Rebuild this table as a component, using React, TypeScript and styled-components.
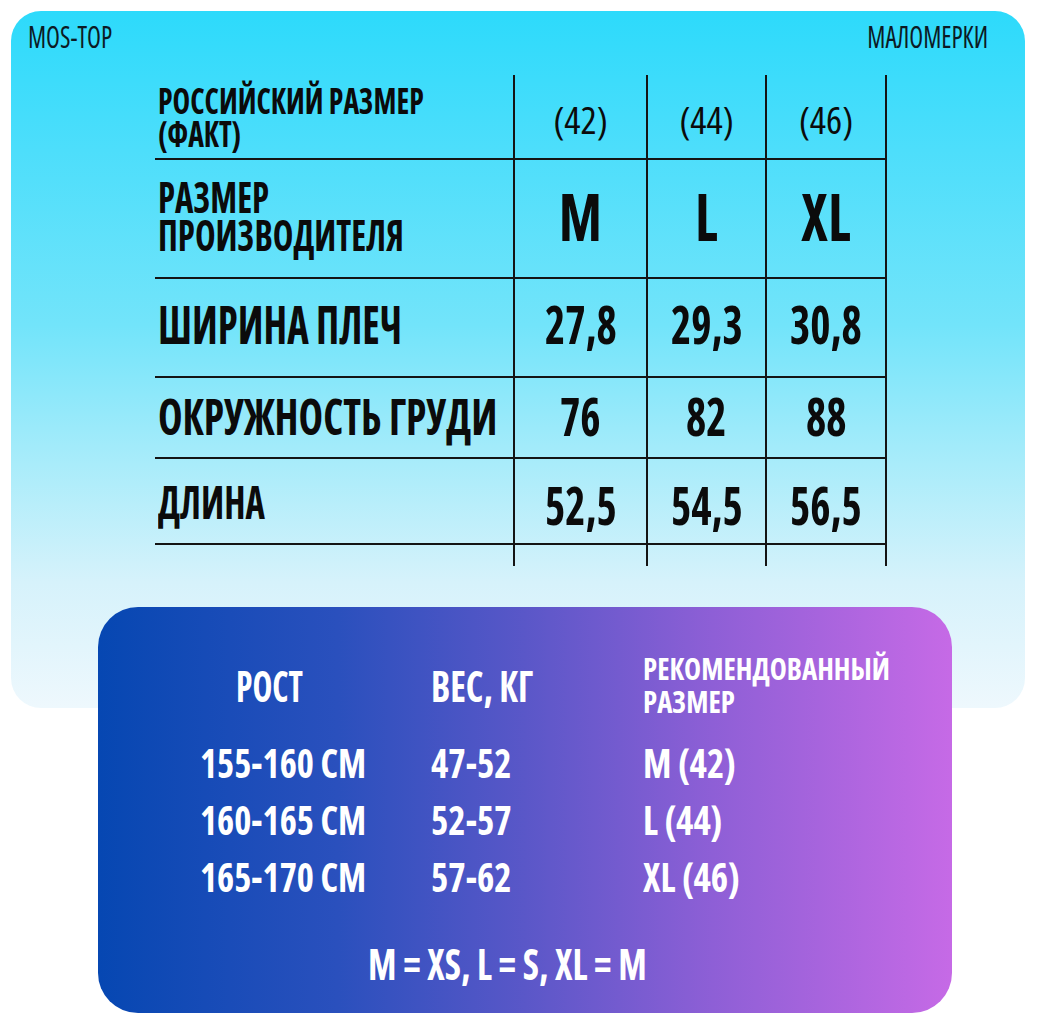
import React from "react";
import styled, { createGlobalStyle } from "styled-components";

const GlobalStyle = createGlobalStyle`
  html, body { margin: 0; padding: 0; background: #ffffff; }
  body { font-family: "Open Sans", "Noto Sans", sans-serif; font-stretch: 75%; }
`;

const Page = styled.div`
  width: 1037px;
  height: 1025px;
  padding: 11px 0 0 11px;
  box-sizing: border-box;
  display: flex;
  flex-direction: column;
  overflow: hidden;
`;

const TopCard = styled.section`
  width: 1014px;
  height: 697px;
  box-sizing: border-box;
  border-radius: 30px;
  background: linear-gradient(
    180deg,
    #2ddafb 0%,
    #4ddefb 20%,
    #72e4fa 45%,
    #a9ecfa 65%,
    #d6f2fb 82%,
    #eef8fd 100%
  );
  display: flex;
  flex-direction: column;
`;

const HeaderBar = styled.div`
  display: flex;
  justify-content: space-between;
  padding: 11px 37px 0 17px;
  height: 29px;
`;

const Brand = styled.span`
  font-family: "Open Sans", sans-serif;
  font-stretch: 75%;
  font-weight: 500;
  font-size: 30px;
  line-height: 29px;
  color: #0c1a24;
`;

const Sq = styled.span<{ $x?: number; $o?: string }>`
  display: inline-block;
  white-space: nowrap;
  transform: scaleX(${(p) => p.$x ?? 0.83});
  transform-origin: ${(p) => p.$o ?? "left"} center;
`;

const Table = styled.div`
  margin: 24px 0 0 144px;
  display: grid;
  grid-template-columns: 358px 133px 119px 122px;
  grid-template-rows: 85px 119px 99px 81px 86px 21px;
  color: #0b0b0b;
`;

const LabelCell = styled.div<{ $stub?: boolean; $pb?: number }>`
  display: flex;
  align-items: center;
  padding: 0 0 ${(p) => p.$pb ?? 0}px 3px;
  border-bottom: ${(p) => (p.$stub ? "none" : "2px solid #141414")};
  box-sizing: border-box;
`;

const ValueCell = styled.div<{ $last?: boolean; $stub?: boolean; $pt?: number; $pb?: number }>`
  display: flex;
  align-items: center;
  justify-content: center;
  padding: ${(p) => p.$pt ?? 0}px 0 ${(p) => p.$pb ?? 0}px 0;
  border-left: 2px solid #141414;
  border-right: ${(p) => (p.$last ? "2px solid #141414" : "none")};
  border-bottom: ${(p) => (p.$stub ? "none" : "2px solid #141414")};
  box-sizing: border-box;
`;

const Label = styled.div<{ $size: number; $lh?: number }>`
  font-weight: 700;
  font-size: ${(p) => p.$size}px;
  line-height: ${(p) => p.$lh ?? p.$size}px;
  text-transform: uppercase;
`;

const Value = styled.div<{ $size: number; $weight?: number }>`
  font-weight: ${(p) => p.$weight ?? 700};
  font-size: ${(p) => p.$size}px;
  line-height: ${(p) => p.$size}px;
`;

const PurpleCard = styled.section`
  margin: -101px 0 0 87px;
  width: 854px;
  height: 406px;
  box-sizing: border-box;
  border-radius: 40px;
  background: linear-gradient(
    90deg,
    #0647b2 0%,
    #2a50bd 28%,
    #5a57c8 50%,
    #8e5fd6 72%,
    #c66ae6 100%
  );
  color: #ffffff;
  padding: 45px 0 0 102px;
  display: flex;
  flex-direction: column;
  position: relative;
`;

const InfoRow = styled.div<{ $h: number }>`
  display: grid;
  grid-template-columns: 231px 212px 1fr;
  height: ${(p) => p.$h}px;
  align-items: center;
`;

const InfoHead = styled.div<{ $indent?: number; $size: number; $lh?: number }>`
  padding-left: ${(p) => p.$indent ?? 0}px;
  font-weight: 700;
  font-size: ${(p) => p.$size}px;
  line-height: ${(p) => p.$lh ?? p.$size}px;
`;

const InfoData = styled.div`
  font-weight: 700;
  font-size: 41px;
  line-height: 57px;
`;

const Rows = styled.div`
  margin-top: 16px;
  display: flex;
  flex-direction: column;
`;

const Footer = styled.div`
  margin-top: 38px;
  padding-right: 138px;
  text-align: center;
  font-weight: 700;
  font-size: 42px;
  line-height: 42px;
`;

const sizes = [
  { ru: "(42)", intl: "M", w: "27,8", c: "76", l: "52,5" },
  { ru: "(44)", intl: "L", w: "29,3", c: "82", l: "54,5" },
  { ru: "(46)", intl: "XL", w: "30,8", c: "88", l: "56,5" },
];

const recs = [
  { h: "155-160 СМ", w: "47-52", s: "M (42)" },
  { h: "160-165 СМ", w: "52-57", s: "L (44)" },
  { h: "165-170 СМ", w: "57-62", s: "XL (46)" },
];

export default function App() {
  return (
    <>
      <GlobalStyle />
      <Page>
        <TopCard>
          <HeaderBar>
            <Brand>
              <Sq $x={0.85}>MOS-TOP</Sq>
            </Brand>
            <Brand>
              <Sq $x={0.85} $o="right">МАЛОМЕРКИ</Sq>
            </Brand>
          </HeaderBar>

          <Table>
            <LabelCell>
              <Label $size={35} $lh={33}>
                <Sq $x={0.85}>
                  РОССИЙСКИЙ РАЗМЕР
                  <br />
                  (ФАКТ)
                </Sq>
              </Label>
            </LabelCell>
            {sizes.map((s, i) => (
              <ValueCell key={"ru" + i} $last={i === 2} $pt={4}>
                <Value $size={38} $weight={500}>
                  <Sq $x={1} $o="center">{s.ru}</Sq>
                </Value>
              </ValueCell>
            ))}

            <LabelCell $pb={6}>
              <Label $size={42} $lh={38}>
                <Sq $x={0.83}>
                  РАЗМЕР
                  <br />
                  ПРОИЗВОДИТЕЛЯ
                </Sq>
              </Label>
            </LabelCell>
            {sizes.map((s, i) => (
              <ValueCell key={"in" + i} $last={i === 2} $pb={8}>
                <Value $size={66}>
                  <Sq $x={0.85} $o="center">{s.intl}</Sq>
                </Value>
              </ValueCell>
            ))}

            <LabelCell $pb={8}>
              <Label $size={53}>
                <Sq $x={0.77}>ШИРИНА ПЛЕЧ</Sq>
              </Label>
            </LabelCell>
            {sizes.map((s, i) => (
              <ValueCell key={"w" + i} $last={i === 2} $pb={10}>
                <Value $size={54}>
                  <Sq $x={0.8} $o="center">{s.w}</Sq>
                </Value>
              </ValueCell>
            ))}

            <LabelCell $pb={4}>
              <Label $size={50}>
                <Sq $x={0.83}>ОКРУЖНОСТЬ ГРУДИ</Sq>
              </Label>
            </LabelCell>
            {sizes.map((s, i) => (
              <ValueCell key={"c" + i} $last={i === 2} $pb={6}>
                <Value $size={54}>
                  <Sq $x={0.8} $o="center">{s.c}</Sq>
                </Value>
              </ValueCell>
            ))}

            <LabelCell>
              <Label $size={46}>
                <Sq $x={0.8}>ДЛИНА</Sq>
              </Label>
            </LabelCell>
            {sizes.map((s, i) => (
              <ValueCell key={"l" + i} $last={i === 2} $pt={6}>
                <Value $size={54}>
                  <Sq $x={0.8} $o="center">{s.l}</Sq>
                </Value>
              </ValueCell>
            ))}

            <LabelCell $stub />
            {sizes.map((s, i) => (
              <ValueCell key={"st" + i} $last={i === 2} $stub />
            ))}
          </Table>
        </TopCard>

        <PurpleCard>
          <InfoRow $h={66}>
            <InfoHead $indent={36} $size={43}>
              <Sq $x={0.78}>РОСТ</Sq>
            </InfoHead>
            <InfoHead $size={43}>
              <Sq $x={0.85}>ВЕС, КГ</Sq>
            </InfoHead>
            <InfoHead $size={31} $lh={33}>
              <Sq $x={0.93}>
                РЕКОМЕНДОВАННЫЙ
                <br />
                РАЗМЕР
              </Sq>
            </InfoHead>
          </InfoRow>
          <Rows>
            {recs.map((r, i) => (
              <InfoRow $h={57} key={i}>
                <InfoData>
                  <Sq $x={0.89}>{r.h}</Sq>
                </InfoData>
                <InfoData>
                  <Sq $x={0.9}>{r.w}</Sq>
                </InfoData>
                <InfoData>
                  <Sq $x={0.9}>{r.s}</Sq>
                </InfoData>
              </InfoRow>
            ))}
          </Rows>
          <Footer>
            <Sq $x={0.88} $o="center">M = XS, L = S, XL = M</Sq>
          </Footer>
        </PurpleCard>
      </Page>
    </>
  );
}
